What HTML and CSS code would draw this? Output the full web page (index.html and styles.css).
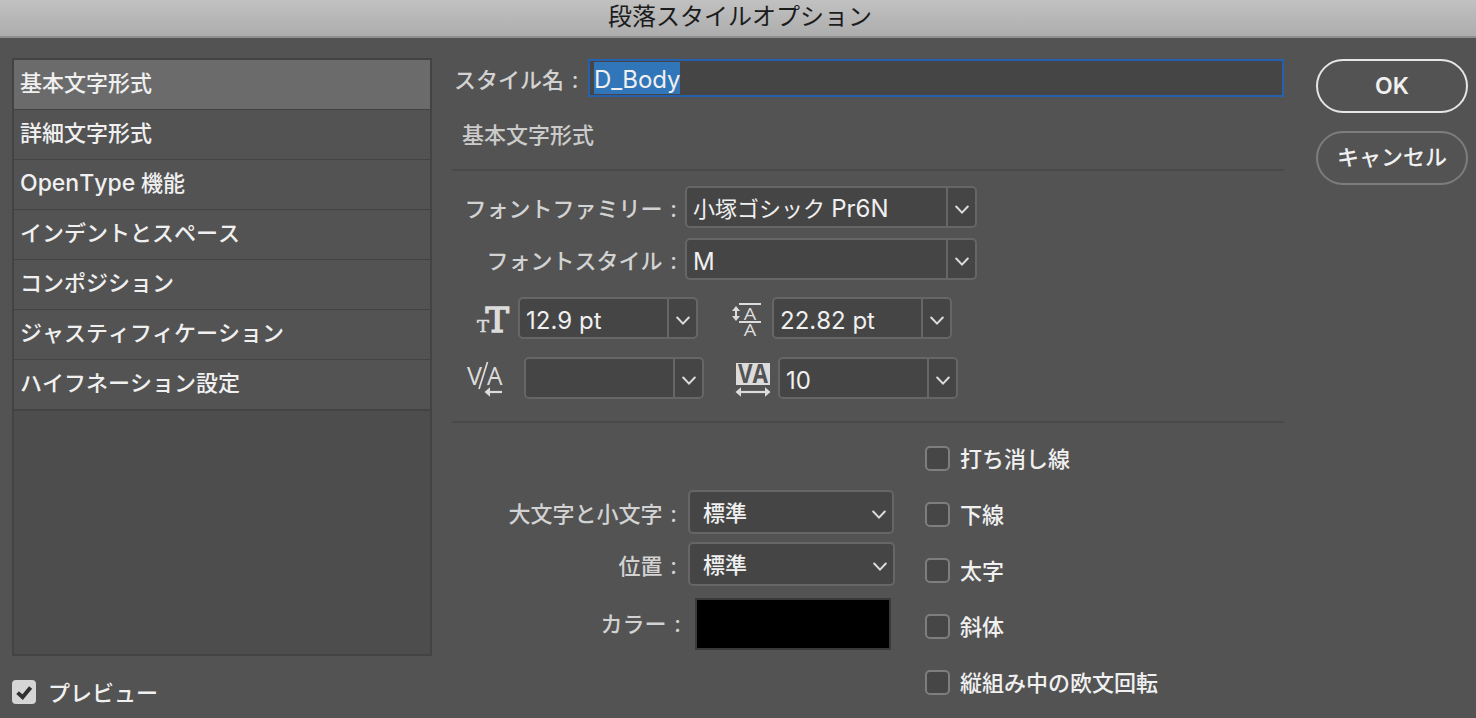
FILE: index.html
```
<!DOCTYPE html>
<html lang="ja">
<head>
  <meta charset="UTF-8" />
  <meta name="viewport" content="width=device-width, initial-scale=1.0"/>
  <title>段落スタイルオプション</title>
  <link rel="stylesheet" href="styles.css">
</head>
<body>
  <svg class="defs" width="0" height="0">
    <symbol id="chevron" viewBox="0 0 14 10">
      <path d="M1.2 1.5 L7 7.6 L12.8 1.5" fill="none" stroke="#dcdcdc" stroke-width="2" stroke-linecap="round"/>
    </symbol>
  </svg>

  <header class="titlebar">段落スタイルオプション</header>

  <main class="dialog">
    <aside class="side">
      <ul class="categories">
        <li class="active">基本文字形式</li>
        <li>詳細文字形式</li>
        <li><span class="latin">OpenType</span> 機能</li>
        <li>インデントとスペース</li>
        <li>コンポジション</li>
        <li>ジャスティフィケーション</li>
        <li>ハイフネーション設定</li>
      </ul>
      <div class="check preview">
        <span class="box checked">
          <svg width="24" height="24" viewBox="0 0 24 24"><path d="M5.6 12.6 L10.6 17.2 L18.6 7.4" fill="none" stroke="#303030" stroke-width="4"/></svg>
        </span>
        <span>プレビュー</span>
      </div>
    </aside>

    <section class="settings">
      <div class="name-row">
        <span class="label">スタイル名 :</span>
        <div class="name-input"><span class="selected latin">D_Body</span></div>
      </div>
      <h2>基本文字形式</h2>

      <div class="fonts">
        <div class="row">
          <span class="label">フォントファミリー :</span>
          <div class="combo wide"><span class="value">小塚ゴシック <span class="latin">Pr6N</span></span><span class="arrow"><svg width="14" height="10"><use href="#chevron"/></svg></span></div>
        </div>
        <div class="row">
          <span class="label">フォントスタイル :</span>
          <div class="combo wide"><span class="value latin">M</span><span class="arrow"><svg width="14" height="10"><use href="#chevron"/></svg></span></div>
        </div>

        <div class="metrics first">
          <svg class="icon" width="36" height="36" viewBox="0 0 36 36">
            <text x="1" y="31" class="slab small" font-size="17" textLength="12" lengthAdjust="spacingAndGlyphs">T</text>
            <text x="9.5" y="30.5" class="slab" font-size="34" textLength="23.5" lengthAdjust="spacingAndGlyphs">T</text>
          </svg>
          <div class="combo"><span class="value latin">12.9 pt</span><span class="arrow"><svg width="14" height="10"><use href="#chevron"/></svg></span></div>
          <svg class="icon leading" width="36" height="36" viewBox="0 0 36 36">
            <path d="M7 3h22M7 21h22" stroke="#dcdcdc" stroke-width="2"/>
            <path d="M4 8v10" stroke="#dcdcdc" stroke-width="2"/>
            <path d="M4 5l4 5H0zM4 20l4-5H0z" fill="#dcdcdc"/>
            <text x="18" y="18.5" class="sans" font-size="17" textLength="12.5" lengthAdjust="spacingAndGlyphs" text-anchor="middle">A</text>
            <text x="18" y="34.5" class="sans" font-size="17" textLength="12.5" lengthAdjust="spacingAndGlyphs" text-anchor="middle">A</text>
          </svg>
          <div class="combo"><span class="value latin">22.82 pt</span><span class="arrow"><svg width="14" height="10"><use href="#chevron"/></svg></span></div>
        </div>
        <div class="metrics second">
          <svg class="icon" width="36" height="36" viewBox="0 0 36 36">
            <text x="0" y="24" class="sans" font-size="26" textLength="15" lengthAdjust="spacingAndGlyphs">V</text>
            <path d="M20.5 1 L12 28" stroke="#dcdcdc" stroke-width="1.7"/>
            <text x="20" y="24" class="sans" font-size="26" textLength="15.5" lengthAdjust="spacingAndGlyphs">A</text>
            <path d="M22 31h13" stroke="#dcdcdc" stroke-width="2.2"/>
            <path d="M17.5 31l5.5-4.8v9.6z" fill="#dcdcdc"/>
          </svg>
          <div class="combo"><span class="value"></span><span class="arrow"><svg width="14" height="10"><use href="#chevron"/></svg></span></div>
          <svg class="icon" width="36" height="36" viewBox="0 0 36 36">
            <rect x="1" y="2" width="34" height="22" fill="#dcdcdc"/>
            <text x="3" y="22" class="knockout" font-size="26" textLength="30" lengthAdjust="spacingAndGlyphs">VA</text>
            <path d="M5 31h26" stroke="#dcdcdc" stroke-width="2.2"/>
            <path d="M0.5 31l5.5-4.8v9.6zM35.5 31l-5.5-4.8v9.6z" fill="#dcdcdc"/>
          </svg>
          <div class="combo"><span class="value latin">10</span><span class="arrow"><svg width="14" height="10"><use href="#chevron"/></svg></span></div>
        </div>
      </div>

      <div class="options">
        <div class="selects">
          <div class="row">
            <span class="label">大文字と小文字 :</span>
            <div class="select"><span>標準</span><svg width="14" height="10"><use href="#chevron"/></svg></div>
          </div>
          <div class="row">
            <span class="label">位置 :</span>
            <div class="select position"><span>標準</span><svg width="14" height="10"><use href="#chevron"/></svg></div>
          </div>
          <div class="row color">
            <span class="label">カラー :</span>
            <div class="swatch"></div>
          </div>
        </div>
        <div class="checks">
          <div class="check"><span class="box"></span><span>打ち消し線</span></div>
          <div class="check"><span class="box"></span><span>下線</span></div>
          <div class="check"><span class="box"></span><span>太字</span></div>
          <div class="check"><span class="box"></span><span>斜体</span></div>
          <div class="check"><span class="box"></span><span>縦組み中の欧文回転</span></div>
        </div>
      </div>
    </section>

    <div class="buttons">
      <button class="primary">OK</button>
      <button>キャンセル</button>
    </div>
  </main>
</body>
</html>
```
FILE: styles.css
```
* {
  box-sizing: border-box;
}
body {
  margin: 0;
  height: 718px;
  overflow: hidden;
  background-color: #535353;
  color: #f0f0f0;
  font-family: Inter, "Noto Sans CJK JP", sans-serif;
  font-size: 22px;
  line-height: 32px;
  font-kerning: none;
}
.defs {
  display: block;
}
.latin {
  font-size: 24px;
}
.titlebar {
  height: 38px;
  padding-left: 4px;
  text-align: center;
  font-size: 24px;
  line-height: 33px;
  color: #1c1c1c;
  background: linear-gradient(#c1c1c1, #adadad);
  border-bottom: 2px solid #8f8f8f;
}
.dialog {
  display: flex;
  height: 680px;
  padding: 20px 8px 0 12px;
}

/* left list */
.side {
  width: 420px;
  margin-right: 20px;
}
.categories {
  height: 598px;
  margin: 0;
  padding: 0;
  list-style: none;
  background-color: #4d4d4d;
  border: 2px solid #434343;
}
.categories li {
  height: 50px;
  padding-left: 6px;
  line-height: 47px;
  font-weight: 500;
  background-color: #535353;
  border-bottom: 1px solid #434343;
}
.categories li.active {
  background-color: #6b6b6b;
}
.categories li:last-child {
  height: 51px;
  border-bottom-width: 2px;
}
.categories .latin {
  font-size: 23px;
}
.check {
  display: flex;
  align-items: center;
  height: 24px;
  gap: 10px;
  font-weight: 500;
}
.check span:last-child {
  padding-top: 2px;
}
.box {
  width: 25px;
  height: 25px;
  flex: none;
  background-color: #464646;
  border: 2px solid #7e7e7e;
  border-radius: 5px;
}
.box.checked {
  width: 24px;
  height: 24px;
  background-color: #d6d6d6;
  border: none;
  border-radius: 4px;
}
.box svg {
  display: block;
}
.preview {
  margin-top: 24px;
  gap: 12px;
}

/* settings */
.settings {
  width: 832px;
  margin-right: 32px;
}
.label {
  padding-top: 3px;
  font-weight: 500;
  color: #d2d2d2;
  white-space: nowrap;
  word-spacing: 2px;
}
.name-row {
  display: flex;
  height: 38px;
  margin-top: 1px;
  padding-left: 2px;
  justify-content: space-between;
  align-items: center;
}
.name-input {
  width: 696px;
  height: 38px;
  padding: 1px 4px;
  background-color: #454545;
  border: 2px solid #2561ae;
}
.selected {
  display: block;
  width: 86px;
  height: 32px;
  line-height: 35px;
  background-color: #3076b8;
}
h2 {
  height: 74px;
  margin: 0;
  padding: 22px 0 0 10px;
  font-size: 22px;
  font-weight: 500;
  color: #cbcbcb;
  border-bottom: 2px solid #4a4a4a;
}
.fonts {
  height: 252px;
  padding-top: 15px;
  border-bottom: 2px solid #4a4a4a;
}
.row {
  display: flex;
  align-items: center;
  justify-content: flex-end;
  gap: 8px;
}
.fonts .row {
  width: 525px;
  margin-bottom: 10px;
}
.combo {
  display: flex;
  width: 180px;
  height: 42px;
  background-color: #454545;
  border: 2px solid #666666;
  border-radius: 5px;
}
.combo.wide {
  width: 292px;
}
.value {
  flex: 1;
  padding-left: 6px;
  line-height: 42px;
}
.value.latin {
  line-height: 43px;
}
.arrow {
  display: flex;
  width: 29px;
  padding-top: 5px;
  align-items: center;
  justify-content: center;
  border-left: 2px solid #666666;
}
.metrics {
  display: flex;
  align-items: center;
}
.metrics.first {
  margin-top: 17px;
  padding-left: 24px;
}
.metrics.second {
  margin-top: 18px;
  padding-left: 15px;
}
.icon {
  margin-top: 2px;
  margin-right: 6px;
  fill: #dcdcdc;
  overflow: visible;
}
.combo + .icon {
  margin-left: 32px;
}
.combo + .leading {
  margin-left: 34px;
  margin-right: 4px;
}
.second .icon {
  margin-right: 21px;
}
.second .combo + .icon {
  margin-left: 31px;
  margin-right: 7px;
}
.slab {
  font-family: "DejaVu Serif", serif;
  stroke: #dcdcdc;
  stroke-width: 1.4px;
}
.slab.small {
  stroke-width: 0.5px;
}
.sans {
  font-family: "Open Sans", sans-serif;
  font-weight: 500;
}
.knockout {
  font-family: "Open Sans", sans-serif;
  font-weight: 700;
  fill: #535353;
}

/* case, position, colour and the check boxes */
.options {
  display: flex;
}
.selects {
  width: 443px;
  padding-top: 67px;
}
.selects .row {
  height: 44px;
  margin-bottom: 8px;
  padding-right: 1px;
  gap: 11px;
}
.select {
  display: flex;
  width: 206px;
  height: 44px;
  padding: 2px 6px 0 13px;
  align-items: center;
  justify-content: space-between;
  font-weight: 500;
  background-color: #454545;
  border: 2px solid #666666;
  border-radius: 5px;
}
.select.position {
  width: 207px;
  margin-right: -1px;
}
.select svg {
  margin-top: 3px;
}
.selects .color {
  height: 52px;
  margin-top: 12px;
  padding-right: 4px;
  gap: 14px;
}
.color .label {
  padding-top: 0;
}
.swatch {
  width: 196px;
  height: 52px;
  background-color: #000;
  border: 2px solid #3a3a3a;
}
.checks {
  display: flex;
  flex-direction: column;
  gap: 32px;
  padding: 23px 0 0 30px;
}

/* buttons */
.buttons {
  display: flex;
  flex-direction: column;
  gap: 18px;
  width: 152px;
  padding-top: 1px;
}
.buttons button {
  height: 54px;
  padding: 0 0 2px;
  font: inherit;
  font-weight: 500;
  color: #f0f0f0;
  background: none;
  border: 2px solid #7d7d7d;
  border-radius: 27px;
}
.buttons .primary {
  padding-bottom: 0;
  border-color: #e6e6e6;
  font-size: 23px;
  font-weight: 600;
}
```
